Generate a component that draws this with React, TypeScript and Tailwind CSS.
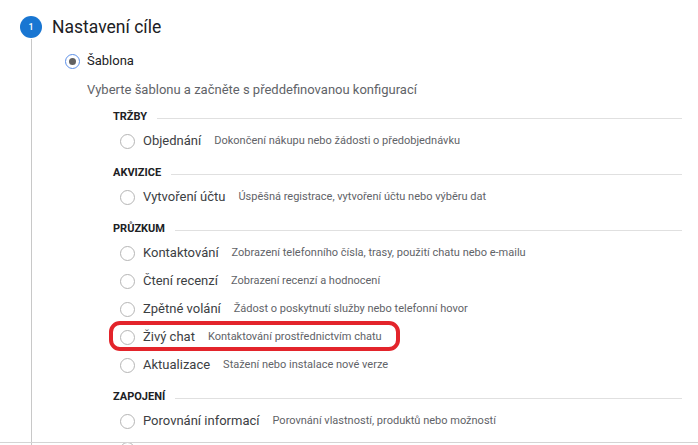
import React from "react";

type Opt = { label: string; desc: string };
type Section = { title: string; options: Opt[] };

const sections: Section[] = [
  { title: "TRŽBY", options: [{ label: "Objednání", desc: "Dokončení nákupu nebo žádosti o předobjednávku" }] },
  { title: "AKVIZICE", options: [{ label: "Vytvoření účtu", desc: "Úspěšná registrace, vytvoření účtu nebo výběru dat" }] },
  {
    title: "PRŮZKUM",
    options: [
      { label: "Kontaktování", desc: "Zobrazení telefonního čísla, trasy, použití chatu nebo e-mailu" },
      { label: "Čtení recenzí", desc: "Zobrazení recenzí a hodnocení" },
      { label: "Zpětné volání", desc: "Žádost o poskytnutí služby nebo telefonní hovor" },
      { label: "Živý chat", desc: "Kontaktování prostřednictvím chatu" },
      { label: "Aktualizace", desc: "Stažení nebo instalace nové verze" },
    ],
  },
  {
    title: "ZAPOJENÍ",
    options: [
      { label: "Porovnání informací", desc: "Porovnání vlastností, produktů nebo možností" },
      { label: "", desc: "" },
    ],
  },
];

function Radio() {
  return <div className="w-[15px] h-[15px] rounded-full border border-[#b5b5b5] bg-white shrink-0" />;
}

export default function App() {
  return (
    <div
      className="relative w-[698px] h-[445px] overflow-hidden bg-white"
      style={{ fontFamily: "Roboto, 'Liberation Sans', sans-serif" }}
    >
      <div className="flex pl-[20px] h-full">
        <div className="flex flex-col items-center w-[22px] pt-[16px]">
          <div className="w-[22px] h-[22px] rounded-full bg-[#1976d2] flex items-center justify-center text-white text-[9px] font-medium leading-none">
            1
          </div>
          <div className="w-px flex-1 bg-[#c8c8c8] mt-[1px]" />
        </div>
        <div className="flex-1 ml-[10px] pt-[15px] pr-[16px]">
          <div className="text-[17.5px] leading-[24px] text-[#202124]">Nastavení cíle</div>
          <div className="flex items-center h-[20px] mt-[12px] ml-[13px]">
            <div className="w-[15px] h-[15px] rounded-full border border-[#5b8fe8] flex items-center justify-center">
              <div className="w-[7px] h-[7px] rounded-full bg-[#616161]" />
            </div>
            <span className="ml-[7px] text-[13px] text-[#202124]">Šablona</span>
          </div>
          <div className="ml-[35px] mt-[9px] text-[13px] leading-[20px] text-[#5f6368]">
            Vyberte šablonu a začněte s předdefinovanou konfigurací
          </div>
          <div className="ml-[61px] mt-[10px]">
            {sections.map((s, i) => (
              <div key={s.title} className={i === 0 ? "" : "mt-[11px]"}>
                <div className="flex items-center h-[14px]">
                  <span className="text-[11px] font-bold text-[#202124] leading-[14px]">{s.title}</span>
                  <div className="flex-1 h-px bg-[#e0e0e0] ml-[10px] mt-[3px]" />
                </div>
                <div className="mt-[3px]">
                  {s.options.map((o, j) => (
                    <div key={j} className="flex items-center h-[28px] ml-[7px]">
                      <Radio />
                      {o.label && (
                        <span className="ml-[8px] text-[13px] text-[#3c4043] whitespace-nowrap">{o.label}</span>
                      )}
                      {o.desc && (
                        <span className="ml-[13px] text-[11px] text-[#5f6368] whitespace-nowrap">{o.desc}</span>
                      )}
                    </div>
                  ))}
                </div>
              </div>
            ))}
          </div>
        </div>
      </div>
      <div className="absolute left-0 right-0 top-[442px] h-px bg-[#d4d4d4]" />
      <div className="absolute left-[109px] top-[321px] w-[291px] h-[30px] border-[4px] border-[#e3242b] rounded-[11px]" />
    </div>
  );
}
